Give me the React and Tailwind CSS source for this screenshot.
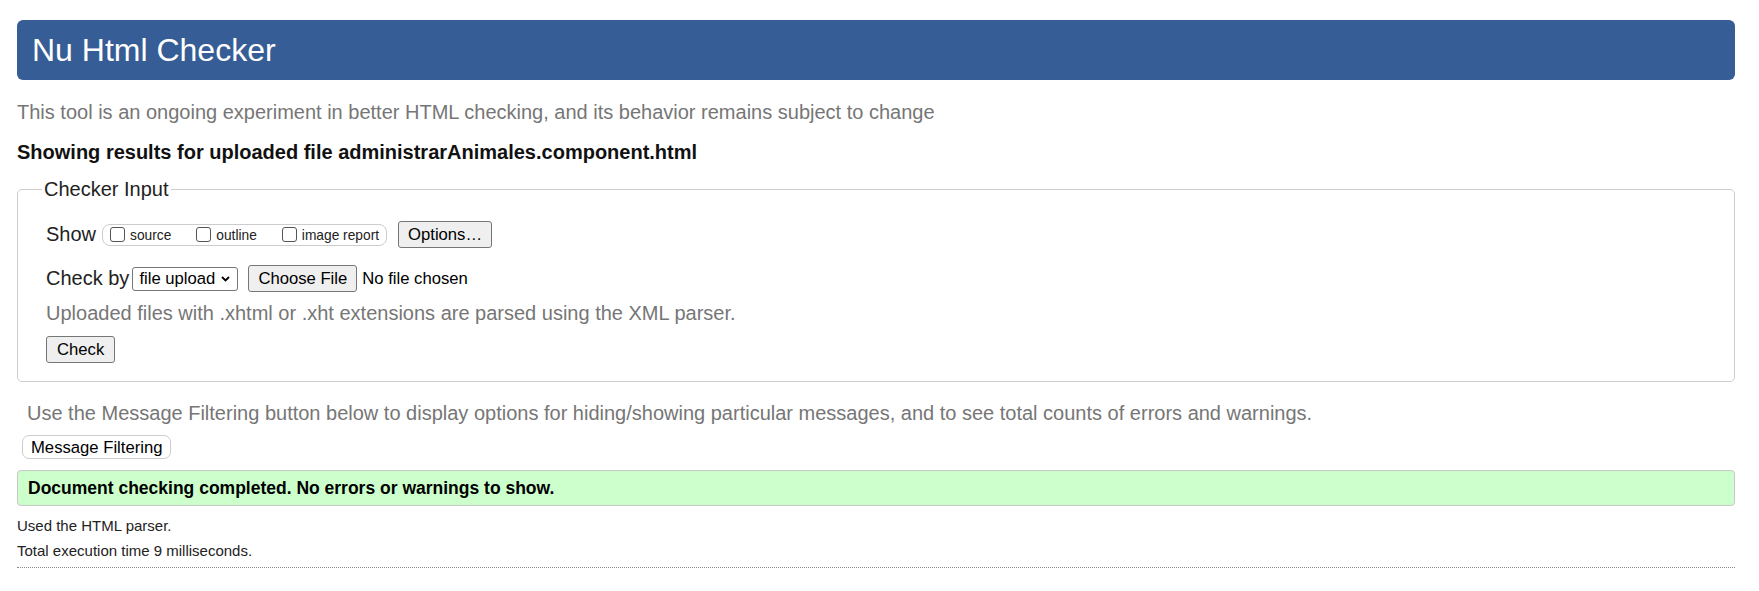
import React from "react";

function Box({ label }) {
  return (
    <span className="flex items-center gap-[5px]">
      <span className="inline-block h-[15px] w-[15px] rounded-[3px] border border-[#555] bg-white" />
      <span className="translate-y-[1px]">{label}</span>
    </span>
  );
}

export default function App() {
  return (
    <div className="min-h-[591px] bg-white pl-[17px] pr-[24px] pt-[20px] font-['Liberation_Sans',Arial,sans-serif] text-[#222]">
      <header className="flex h-[60px] items-center rounded-[6px] bg-[#365d95] pl-[15px]">
        <h1 className="text-[32px] leading-[37px] text-white">Nu Html Checker</h1>
      </header>

      <p className="mt-[21px] text-[20px] leading-[23px] text-[#767676]">
        This tool is an ongoing experiment in better HTML checking, and its behavior remains subject to change
      </p>

      <p className="mt-[17px] text-[20px] font-bold leading-[23px] text-[#111]">
        Showing results for uploaded file administrarAnimales.component.html
      </p>

      <fieldset className="mt-[14px] rounded-[5px] border border-[#cccccc] pb-[18px] pl-[28px]">
        <legend className="-ml-[4px] px-[2px] text-[20px] leading-[23px] text-[#222]">Checker Input</legend>

        <div className="mt-[20px] flex h-[27px] items-center">
          <span className="text-[20px] leading-[23px]">Show</span>
          <div className="ml-[6px] flex h-[22px] items-center gap-[25px] rounded-[8px] border border-[#cccccc] px-[7px] text-[13.75px] leading-[16px]">
            <Box label="source" />
            <Box label="outline" />
            <Box label="image report" />
          </div>
          <button className="ml-[11px] h-[27px] rounded-[3px] border border-[#767676] bg-[#efefef] px-[9px] text-[16.67px] leading-[19px] text-black">
            Options…
          </button>
        </div>

        <div className="mt-[17px] flex h-[27px] items-center">
          <span className="text-[20px] leading-[23px]">Check by</span>
          <div className="ml-[3px] flex h-[24px] w-[106px] items-center justify-between rounded-[3px] border border-[#767676] bg-white pl-[6px] pr-[7px] text-[16.67px] leading-[19px] text-black">
            <span>file upload</span>
            <svg width="9" height="6" viewBox="0 0 9 6" fill="none">
              <path d="M1 1l3.5 3.5L8 1" stroke="#000" strokeWidth="1.8" />
            </svg>
          </div>
          <button className="ml-[10px] h-[27px] rounded-[3px] border border-[#767676] bg-[#efefef] px-[9px] text-[16.67px] leading-[19px] text-black">
            Choose File
          </button>
          <span className="ml-[5px] text-[16.67px] leading-[19px] text-black">No file chosen</span>
        </div>

        <p className="mt-[10px] text-[20px] leading-[23px] text-[#767676]">
          Uploaded files with .xhtml or .xht extensions are parsed using the XML parser.
        </p>

        <button className="mt-[11px] h-[27px] rounded-[3px] border border-[#767676] bg-[#efefef] px-[10px] text-[16.67px] leading-[19px] text-black">
          Check
        </button>
      </fieldset>

      <p className="ml-[10px] mt-[20px] text-[20px] leading-[23px] text-[#767676]">
        Use the Message Filtering button below to display options for hiding/showing particular messages, and to see total counts of errors and warnings.
      </p>

      <button className="ml-[5px] mt-[10px] h-[24px] rounded-[7px] border border-[#cccccc] bg-white px-[8px] text-[16.67px] leading-[19px] text-black">
        Message Filtering
      </button>

      <div className="mt-[10px] flex h-[36px] items-center rounded-[4px] border border-[#c8c8c8] bg-[#ccffcc] pl-[10px]">
        <p className="text-[17.5px] font-bold leading-[20px] text-black">
          Document checking completed. No errors or warnings to show.
        </p>
      </div>

      <p className="mt-[7px] text-[15px] leading-[25px] text-[#222]">Used the HTML parser.</p>
      <p className="text-[15px] leading-[25px] text-[#222]">Total execution time 9 milliseconds.</p>

      <div className="mt-[4px] border-t border-dotted border-[#888]" />
    </div>
  );
}
